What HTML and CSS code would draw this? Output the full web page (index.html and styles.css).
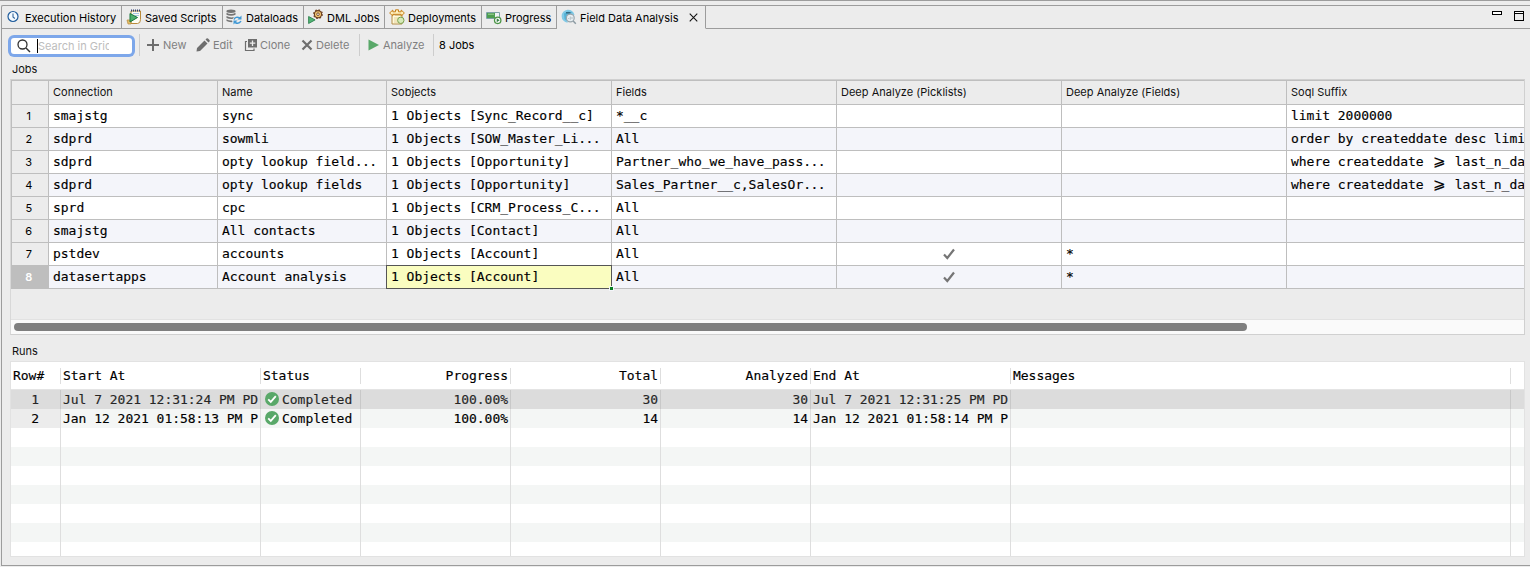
FILE: index.html
```html
<!DOCTYPE html>
<html lang="en">
<head>
<meta charset="utf-8">
<title>Field Data Analysis</title>
<link rel="stylesheet" href="styles.css">
</head>
<body>
<div class="window">
  <div class="tabs">
    <div class="tab t1"><svg class="ic" viewBox="0 0 16 16"><circle cx="8" cy="7.500" r="5" fill="#f4faff" stroke="#1f5c9c" stroke-width="1.200"/><path d="M8 4.500V8l1.800 1.500" fill="none" stroke="#35679b" stroke-width="1.100"/></svg><span>Execution History</span></div>
    <div class="tab t2"><svg class="ic" viewBox="0 0 16 16"><path d="M5 2h9.500v8.500q0 4-3 4H5z" fill="#fdfcf2" stroke="#b98b3c"/><path d="M5 1.500h10" stroke="#2f3f75" stroke-width="2" stroke-dasharray="1 1"/><path d="M7 4.500h6M9 6.500h4" stroke="#a9c6e4"/><path d="M1 11h4v4H2z" fill="#e2bd6a" stroke="#b98b3c" stroke-width=".7"/><path d="M4 4.500l7.500 4-7.500 4.500z" fill="#4fae6c" stroke="#18763c"/></svg><span>Saved Scripts</span></div>
    <div class="tab t3"><svg class="ic" viewBox="0 0 16 16"><g fill="#747474"><ellipse cx="5" cy="2.300" rx="4.600" ry="1.700"/><path d="M.5 3.800q4.500 2.400 9 0v2q-4.500 2-9 0zM.5 7q4 2.300 7.500 1L6.500 10q-3.500.2-6-1zM.5 10.200q2.500 1.600 5.500 1.300l.5 1.600q-3.500.3-6-1z"/></g><g fill="none" stroke="#4199d5" stroke-width="1.500"><path d="M8 10.500q1.500-3.500 6-1.500M15 12q-2 3.500-6 1.500"/></g><path d="M15.500 6.500v4h-4zM7.500 15.500v-4h4z" fill="#4199d5"/></svg><span>Dataloads</span></div>
    <div class="tab t4"><svg class="ic" viewBox="0 0 16 16"><circle cx="10" cy="5.200" r="3.600" fill="#f1c572" stroke="#6c3f20" stroke-width="1.100"/><circle cx="10" cy="5.200" r="4.300" fill="none" stroke="#6c3f20" stroke-width="1.200" stroke-dasharray="1.600 1.780"/><circle cx="10" cy="5.200" r="1.300" fill="#fff" stroke="#6c3f20" stroke-width=".9"/><path d="M.6 7.500l6.500 3.400-6.500 3.600z" fill="#53b475" stroke="#227744" stroke-width=".8"/></svg><span>DML Jobs</span></div>
    <div class="tab t5"><svg class="ic" viewBox="0 0 16 16"><path d="M3 7l1-2 2 1h7v9H3z" fill="#fff9db" stroke="#b38d48"/><path d="M.6 4L3.800 1v1.800h2.700V.8h3v2h2.700V1l3.200 3-3.200 3V5.300H3.800V7z" fill="#fff0bd" stroke="#c7811a"/><path d="M5 9h4M5 11h3M5 13h4" stroke="#e3d29a"/><circle cx="11.800" cy="11.300" r="3.200" fill="#d7eab9" stroke="#7a9f4c"/></svg><span>Deployments</span></div>
    <div class="tab t6"><svg class="ic" viewBox="0 0 16 16"><path d="M.5 3.500h13v6H.5z" fill="#eef3f5" stroke="#7da2a7"/><path d="M1 4h8v5H1z" fill="#4d9e50"/><path d="M2 5.200h6" stroke="#a0d29c"/><circle cx="11.700" cy="11.300" r="3.200" fill="#fff" stroke="#4b9446" stroke-width="1.300"/><path d="M10.700 9.300l3 2-3 2z" fill="#388048"/></svg><span>Progress</span></div>
    <div class="tab t7 active"><svg class="ic" viewBox="0 0 16 16"><path d="M13.500 6A6.500 6.500 0 1 0 6.500 13.700L7.500 8z" fill="#82cae6"/><path d="M3 4.500l4-2 4.500 1-3 1.500-2.500 3-.5 4-2-2z" fill="#55b2d6"/><path d="M5 3h4.500v1.500H5z" fill="#306b84"/><circle cx="9.300" cy="9" r="3.900" fill="#e6eef2" stroke="#99a5ac" stroke-width="1.200"/><path d="M7.700 10V9M9.300 10.800V7.500M11 10V8" stroke="#b3bec4"/><path d="M12.200 12l2.600 2.800" stroke="#8b9aa3" stroke-width="1.400"/></svg><span>Field Data Analysis</span><svg class="close" viewBox="0 0 10 10"><path d="M.8.800l8.400 8.400M9.200.800L.800 9.200" stroke="#111" stroke-width="1.200"/></svg></div>
    <div class="winctl"><i class="min"></i><i class="max"></i></div>
  </div>
  <div class="toolbar">
    <div class="search"><svg class="mag" viewBox="0 0 14 14"><circle cx="5.500" cy="5.500" r="4.500" fill="none" stroke="#303030" stroke-width="1.300"/><path d="M9 9l4 4" stroke="#303030" stroke-width="1.500"/></svg><i class="caret"></i><span class="ph">Search in Grid</span></div>
    <div class="group g1">
      <div class="btn new"><svg viewBox="0 0 14 14"><path d="M7 1v12M1 7h12" stroke="#6e6e6e" stroke-width="2"/></svg><span>New</span></div>
      <div class="btn edit"><svg viewBox="0 0 14 14"><path d="M.5 13.500l.5-3.500L8.500 2.500 11.500 5.500 4 13zM9.500 1.500l1-1q.8-.5 1.500 0L13.500 2q.5.8 0 1.500l-1 1z" fill="#6e6e6e"/></svg><span>Edit</span></div>
      <div class="btn clone"><svg viewBox="0 0 14 14"><path d="M4 1h9v8.500H4z" fill="#6e6e6e"/><path d="M8.500 2.500v5.500M5.800 5.200h5.500" stroke="#ececec" stroke-width="1.300"/><path d="M3 3.500H1.500v9h8.500v-2" fill="none" stroke="#6e6e6e" stroke-width="1.200"/></svg><span>Clone</span></div>
      <div class="btn delete"><svg viewBox="0 0 14 14"><path d="M2.500 2.500l9 9M11.500 2.500l-9 9" stroke="#6e6e6e" stroke-width="2.200"/></svg><span>Delete</span></div>
    </div>
    <div class="group g2"><div class="btn analyze"><svg viewBox="0 0 14 14"><path d="M1.500 1.500L12 7 1.500 12.500z" fill="#59a869"/></svg><span>Analyze</span></div></div>
    <div class="group g3"><span class="count">8 Jobs</span></div>
  </div>
  <div class="label jobs-label">Jobs</div>
  <div class="grid">
    <div class="row head"><div></div><div>Connection</div><div>Name</div><div>Sobjects</div><div>Fields</div><div>Deep Analyze (Picklists)</div><div>Deep Analyze (Fields)</div><div>Soql Suffix</div></div>
    <div class="row"><div class="num">1</div><div>smajstg</div><div>sync</div><div>1 Objects [Sync_Record__c]</div><div>*__c</div><div></div><div></div><div>limit 2000000</div></div>
    <div class="row"><div class="num">2</div><div>sdprd</div><div>sowmli</div><div>1 Objects [SOW_Master_Li<span class="dots">...</span></div><div>All</div><div></div><div></div><div>order by createddate desc limi</div></div>
    <div class="row"><div class="num">3</div><div>sdprd</div><div>opty lookup field<span class="dots">...</span></div><div>1 Objects [Opportunity]</div><div>Partner_who_we_have_pass<span class="dots">...</span></div><div></div><div></div><div>where createddate <b class="ge">⩾</b> last_n_da</div></div>
    <div class="row"><div class="num">4</div><div>sdprd</div><div>opty lookup fields</div><div>1 Objects [Opportunity]</div><div>Sales_Partner__c,SalesOr<span class="dots">...</span></div><div></div><div></div><div>where createddate <b class="ge">⩾</b> last_n_da</div></div>
    <div class="row"><div class="num">5</div><div>sprd</div><div>cpc</div><div>1 Objects [CRM_Process_C<span class="dots">...</span></div><div>All</div><div></div><div></div><div></div></div>
    <div class="row"><div class="num">6</div><div>smajstg</div><div>All contacts</div><div>1 Objects [Contact]</div><div>All</div><div></div><div></div><div></div></div>
    <div class="row"><div class="num">7</div><div>pstdev</div><div>accounts</div><div>1 Objects [Account]</div><div>All</div><div class="tick"><svg viewBox="0 0 12 12"><path d="M1 6.500L4.300 10 11 1.500" fill="none" stroke="#757575" stroke-width="2.200"/></svg></div><div>*</div><div></div></div>
    <div class="row"><div class="num sel">8</div><div>datasertapps</div><div>Account analysis</div><div class="cursor">1 Objects [Account]<i class="handle"></i></div><div>All</div><div class="tick"><svg viewBox="0 0 12 12"><path d="M1 6.500L4.300 10 11 1.500" fill="none" stroke="#757575" stroke-width="2.200"/></svg></div><div>*</div><div></div></div>
    <div class="scroll"><i class="thumb"></i></div>
  </div>
  <div class="label runs-label">Runs</div>
  <div class="runs">
    <div class="run rhead"><div>Row#</div><div>Start At</div><div>Status</div><div class="r">Progress</div><div class="r">Total</div><div class="r">Analyzed</div><div>End At</div><div>Messages</div><div></div></div>
    <div class="run picked"><div class="n">1</div><div>Jul 7 2021 12:31:24 PM PD</div><div class="st"><svg viewBox="0 0 14 14"><circle cx="7" cy="7" r="7" fill="#59a869"/><path d="M3.200 7.300L5.800 9.900l5-5.700" fill="none" stroke="#fff" stroke-width="1.800"/></svg>Completed</div><div class="r">100.00%</div><div class="r">30</div><div class="r">30</div><div>Jul 7 2021 12:31:25 PM PD</div><div></div><div></div></div>
    <div class="run"><div class="n">2</div><div>Jan 12 2021 01:58:13 PM P</div><div class="st"><svg viewBox="0 0 14 14"><circle cx="7" cy="7" r="7" fill="#59a869"/><path d="M3.200 7.300L5.800 9.900l5-5.700" fill="none" stroke="#fff" stroke-width="1.800"/></svg>Completed</div><div class="r">100.00%</div><div class="r">14</div><div class="r">14</div><div>Jan 12 2021 01:58:14 PM P</div><div></div><div></div></div>
    <div class="run"><div></div><div></div><div></div><div></div><div></div><div></div><div></div><div></div><div></div></div>
    <div class="run"><div></div><div></div><div></div><div></div><div></div><div></div><div></div><div></div><div></div></div>
    <div class="run"><div></div><div></div><div></div><div></div><div></div><div></div><div></div><div></div><div></div></div>
    <div class="run"><div></div><div></div><div></div><div></div><div></div><div></div><div></div><div></div><div></div></div>
    <div class="run"><div></div><div></div><div></div><div></div><div></div><div></div><div></div><div></div><div></div></div>
    <div class="run"><div></div><div></div><div></div><div></div><div></div><div></div><div></div><div></div><div></div></div>
    <div class="run"><div></div><div></div><div></div><div></div><div></div><div></div><div></div><div></div><div></div></div>
  </div>
</div>
</body>
</html>
```
FILE: styles.css
```css
* { box-sizing: border-box; }
body { margin: 0; width: 1530px; height: 567px; overflow: hidden; background: #ececec; border-top: 1px solid #9c9c9c; padding: 4px 0 0 1px; font: 11px/14px Inter, "Liberation Sans", sans-serif; color: #111; }
svg { display: block; flex: none; }
.window { height: 561px; border: 1px solid #9c9c9c; border-right: 0; border-radius: 2px 0 0 0; }

.tabs { display: flex; height: 23px; }
.tab { display: flex; align-items: center; border-right: 1px solid #9c9c9c; border-bottom: 1px solid #9c9c9c; padding-left: 4px; white-space: nowrap; }
.tab .ic { width: 16px; height: 16px; margin-right: 3px; }
.tab span { padding-top: 2px; color: #000; }
.t1 { width: 120px; padding-left: 3px; }
.t1 .ic { margin-right: 4px; }
.t2 { width: 101px; }
.t3 { width: 81px; padding-left: 3px; }
.t3 .ic { margin-right: 4px; }
.t4 { width: 81px; }
.t5 { width: 97px; }
.t6 { width: 75px; }
.t7 { width: 149px; }
.tab.active { border-bottom-color: transparent; }
.close { width: 9px; height: 9px; margin-left: 10px; }
.winctl { flex: 1; display: flex; justify-content: flex-end; align-items: flex-start; gap: 12px; padding: 5px 6px 0 0; border-bottom: 1px solid #9c9c9c; }
.min { width: 10px; height: 4px; border: 1px solid #000; background: #fff; }
.max { width: 10px; height: 10px; border: 1px solid #000; background: linear-gradient(#fff 1px, #000 1px, #000 2px, #ececec 2px); }

.toolbar { display: flex; height: 34px; padding: 5px 0 0 8px; }
.search { display: flex; align-items: center; width: 121px; height: 16px; margin: 4px 0 0 1px; padding-left: 6px; background: #fff; border-radius: 3px; box-shadow: 0 0 0 3px #7da7ea; }
.mag { width: 14px; height: 14px; margin-top: -1px; }
.caret { width: 1px; height: 14px; background: #000; margin: -1px 0 0 6px; }
.ph { width: 71px; overflow: hidden; white-space: nowrap; color: #bdbdbd; margin-top: -1px; }
.group { display: flex; height: 22px; border-left: 1px solid #cdcdcd; }
.g1 { margin-left: 7px; width: 220px; }
.g2 { width: 74px; }
.btn { display: flex; align-items: center; color: #808080; padding-left: 6px; }
.btn svg { width: 14px; height: 14px; margin-right: 3px; }
.new { width: 51px; }
.edit { width: 48px; padding-left: 5px; }
.clone { width: 56px; padding-left: 5px; }
.clone svg { margin-right: 2px; }
.delete { padding-left: 5px; }
.delete svg { margin-right: 2px; }
.analyze { padding-left: 7px; }
.analyze svg { margin-right: 2px; }
.count { line-height: 22px; padding-left: 5px; color: #000; }
.label { padding-left: 10px; height: 16px; line-height: 12px; }

.grid { width: 1515px; height: 256px; margin-left: 8px; border: 1px solid #d0d0d0; border-left-color: #d8d8d8; display: flex; flex-direction: column; overflow: hidden; }
.row { display: grid; grid-template-columns: 38px 169px 169px 225px 225px 225px 225px 237px; height: 23px; flex: none; font: 13px/21px "DejaVu Sans Mono", monospace; letter-spacing: -.026px; background: #fff; color: #000; -webkit-text-stroke: .15px; }
.row:nth-child(odd) { background: #f4f5fa; }
.row > div { border-right: 1px solid #bebebe; border-bottom: 1px solid #bebebe; padding-left: 4px; white-space: pre; overflow: hidden; height: 23px; }
.row > div:last-child { border-right: 0; }
.row > div:first-child { border-left: 1px solid #bebebe; }
.row.head { height: 25px; background: #ececec; font: 11px/22px Inter, "Liberation Sans", sans-serif; letter-spacing: .01px; color: #111; -webkit-text-stroke: 0; }
.row.head > div { height: 25px; border-top: 1px solid #bebebe; }
.row .num { background: #ececec; text-align: center; padding: 0 2.500px 0 0; font: 11px/22px Inter, "Liberation Sans", sans-serif; letter-spacing: 0; -webkit-text-stroke: 0; }
.row .num.sel { background: #bebebe; color: #fff; font-weight: 600; }
.dots { letter-spacing: -.5px; }
.ge { display: inline-block; width: 15.6px; height: 21px; text-align: center; font-weight: 400; font-size: 15px; vertical-align: top; }
.tick { display: flex; align-items: center; justify-content: center; }
.row > .tick { padding: 0; }
.tick svg { width: 12px; height: 12px; }
.row .cursor { position: relative; overflow: visible; margin: -1px 0 0 -1px; height: 24px; padding-top: 0; border: 1px solid #555; background: #fafdc0; }
.handle { position: absolute; right: -3px; bottom: -3px; width: 5px; height: 5px; background: #087f23; border: 1px solid #f4f5fa; z-index: 2; }
.scroll { height: 15px; margin-top: auto; padding: 3px 0 0 3px; background: #fafafa; border-top: 1px solid #e2e2e2; }
.thumb { display: block; width: 1233px; height: 8px; border-radius: 4px; background: #7f7f7f; }

.runs-label { height: 26px; padding-top: 9px; line-height: 14px; }
.runs { width: 1515px; height: 196px; margin-left: 8px; border: 1px solid #e2e2e2; background: #fff; overflow: hidden; }
.run { display: grid; grid-template-columns: 50px 200px 100px 150px 150px 150px 200px 500px 13px; height: 19px; font: 13px/19px "DejaVu Sans Mono", monospace; letter-spacing: -.026px; color: #000; -webkit-text-stroke: .15px; }
.run:nth-child(odd) { background: #f4f6f5; }
.run > div { border-right: 1px solid #dedede; padding-left: 2px; white-space: pre; overflow: hidden; }
.run > div:last-child { border: 0; }
.run.rhead { height: 28px; background: #fff; border-bottom: 1px solid #e4e4e4; line-height: 15px; padding-top: 6px; }
.run.rhead > div { height: 16px; }
.run.picked { background: #dcdcdc; color: #262626; }
.run.picked > div { border-color: #c8c8c8; }
.run:nth-child(3) .n { background: #ececec; }
.run > .n { text-align: right; padding-right: 21px; }
.run > .r { text-align: right; padding-right: 2px; }
.rhead > .r { padding-right: 2px; }
.st { display: flex; align-items: center; }
.run > .st { padding-left: 4px; }
.run.rhead > div { padding-left: 2px; }
.st svg { width: 14px; height: 14px; margin: -1px 3px 0 0; }
```
